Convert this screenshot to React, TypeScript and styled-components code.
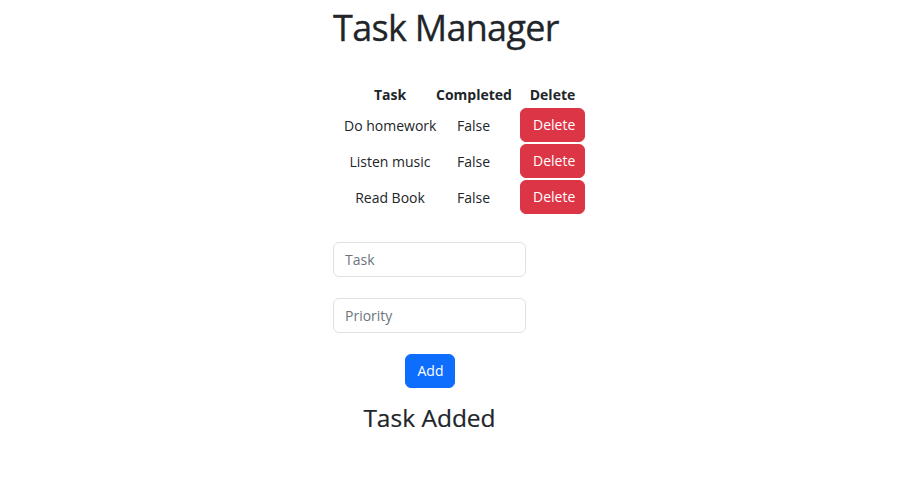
import React from "react";
import styled, { createGlobalStyle } from "styled-components";

const Global = createGlobalStyle`
  html, body { margin: 0; padding: 0; background: #fff; }
  body {
    font-family: "Open Sans", "Noto Sans", sans-serif;
    font-size: 16px;
    line-height: 1.5;
    color: #212529;
  }
  * { box-sizing: border-box; }
`;

const Page = styled.div`
  display: flex;
  justify-content: center;
`;

const Column = styled.div`
  width: 254px;
  display: flex;
  flex-direction: column;
  align-items: flex-start;
`;

const Title = styled.h1`
  margin: 6px 0 35px;
  font-size: 36px;
  letter-spacing: -0.7px;
  font-weight: 500;
  line-height: 1.2;
  white-space: nowrap;
  -webkit-text-stroke: 0.3px #212529;
`;

const Table = styled.table`
  border-collapse: collapse;
  table-layout: fixed;
  width: 250px;
  flex-shrink: 0;
  text-align: center;
  white-space: nowrap;
  margin: 0 0 27px 11px;
`;

const Th = styled.th<{ $w: number }>`
  width: ${(p) => p.$w}px;
  padding: 0 0 2px;
  font-weight: 700;
  font-size: 14px;
`;

const Td = styled.td`
  padding: 1px 0;
  font-size: 14px;
`;

const DangerButton = styled.button`
  font-family: inherit;
  font-size: 14px;
  line-height: 24px;
  padding: 4px 12px;
  border: 1px solid #dc3545;
  border-radius: 6px;
  background: #dc3545;
  color: #fff;
  width: 65px;
`;

const Form = styled.form`
  width: 193px;
  display: flex;
  flex-direction: column;
  align-items: center;
`;

const Input = styled.input`
  width: 100%;
  height: 35px;
  margin-bottom: 21px;
  padding: 4px 11px;
  font-family: inherit;
  font-size: 14px;
  color: #212529;
  border: 1px solid #dee2e6;
  border-radius: 6px;
  outline: none;
  &::placeholder { color: #6c757d; }
`;

const PrimaryButton = styled.button`
  font-family: inherit;
  font-size: 14px;
  line-height: 24px;
  padding: 4px 12px;
  height: 34px;
  width: 50px;
  border: 1px solid #0d6efd;
  border-radius: 6px;
  background: #0d6efd;
  color: #fff;
`;

const Status = styled.h3`
  margin: 15px 0 0;
  font-size: 24.5px;
  font-weight: 500;
  line-height: 1.2;
  white-space: nowrap;
  -webkit-text-stroke: 0.2px #212529;
`;

const tasks = [
  { name: "Do homework", done: false },
  { name: "Listen music", done: false },
  { name: "Read Book", done: false },
];

export default function App() {
  return (
    <Page>
      <Global />
      <Column>
        <Title>Task Manager</Title>
        <Table>
          <thead>
            <tr>
              <Th $w={92}>Task</Th>
              <Th $w={75}>Completed</Th>
              <Th $w={83}>Delete</Th>
            </tr>
          </thead>
          <tbody>
            {tasks.map((t) => (
              <tr key={t.name}>
                <Td>{t.name}</Td>
                <Td>{t.done ? "True" : "False"}</Td>
                <Td>
                  <DangerButton type="button">Delete</DangerButton>
                </Td>
              </tr>
            ))}
          </tbody>
        </Table>
        <Form onSubmit={(e) => e.preventDefault()}>
          <Input placeholder="Task" />
          <Input placeholder="Priority" />
          <PrimaryButton type="submit">Add</PrimaryButton>
          <Status>Task Added</Status>
        </Form>
      </Column>
    </Page>
  );
}
